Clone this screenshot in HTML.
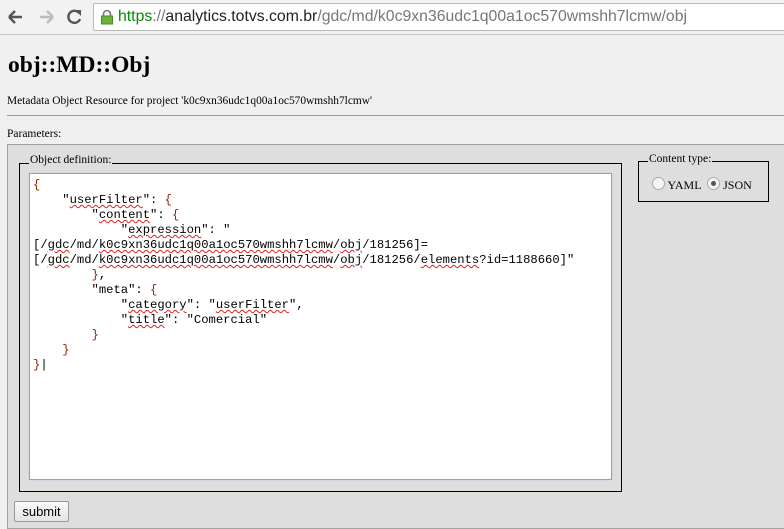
<!DOCTYPE html>
<html><head><style>
body{margin:0;width:784px;height:529px;background:#f0f0f0;position:relative;overflow:hidden;font-family:"Liberation Serif",serif;}
.bar{position:absolute;left:0;top:0;width:784px;height:34px;background:#f2f2f2;border-bottom:1px solid #c8c8c8;}
.addr{position:absolute;left:93px;top:3px;width:700px;height:26px;background:#fff;border:1px solid #b8b8b8;border-radius:2px;font-family:"Liberation Sans",sans-serif;font-size:15.8px;line-height:26px;color:#777;}
.abs{position:absolute;}
h1{position:absolute;left:8px;top:52px;margin:0;font-size:23.5px;font-weight:bold;color:#000;}
.code{position:absolute;left:29px;top:173px;background:#fff;border:1px solid #7ea3e0;box-shadow:0 0 1px #9fbef0;font-family:"Liberation Mono",monospace;font-size:12.2px;line-height:15px;white-space:pre;padding:4px 0 0 3px;box-sizing:border-box;width:583px;height:307px;color:#000}
.u{text-decoration:underline wavy #e02020;text-decoration-thickness:1px;text-underline-offset:1px}
.b{color:#8b2500}
.radio{display:inline-block;width:11px;height:11px;border:1px solid #aaa;border-radius:50%;background:#f4f4f4;vertical-align:-1px;position:relative}
</style></head><body>
<div class="bar">
 <svg class="abs" style="left:6px;top:8px" width="80" height="18"><path d="M3 9h13M3 9l6-6M3 9l6 6" stroke="#555" stroke-width="2.4" fill="none"/><path d="M34 9h13M47 9l-6-6M47 9l-6 6" stroke="#bbb" stroke-width="2.4" fill="none"/><path d="M73 5a6 6 0 1 0 1 6" stroke="#555" stroke-width="2.4" fill="none"/><path d="M69 2h6v6z" fill="#555"/></svg>
 <div class="addr"><svg class="abs" style="left:6px;top:5px" width="14" height="16"><path d="M3.5 7V5a3.5 3.5 0 0 1 7 0v2" stroke="#777" stroke-width="1.6" fill="none"/><rect x="1.5" y="7" width="11" height="8" fill="#6cb33e" stroke="#4a8a2a"/></svg><span style="position:absolute;left:24px;top:0"><span style="color:#0a8a0a">https</span><span style="color:#777">://</span><span style="color:#222">analytics.totvs.com.br</span>/gdc/md/k0c9xn36udc1q00a1oc570wmshh7lcmw/obj</span></div>
</div>
<h1>obj::MD::Obj</h1>
<div class="abs" style="left:7px;top:95px;font-size:11.4px">Metadata Object Resource for project 'k0c9xn36udc1q00a1oc570wmshh7lcmw'</div>
<div class="abs" style="left:7px;top:115px;width:777px;border-top:1px solid #999"></div>
<div class="abs" style="left:7px;top:128px;font-size:11.5px">Parameters:</div>
<div class="abs" style="left:7px;top:144px;width:790px;height:383px;background:#dedede;border:1px solid #a0a0a0"></div>
<div class="abs" style="left:19px;top:163px;width:601px;height:327px;border:1px solid #000"></div>
<div class="abs" style="left:29px;top:154px;background:#dedede;font-size:11.5px;padding:0 1px">Object definition:</div>
<div class="code"><span class="b">{</span>
    "<span class="u">userFilter</span>": <span class="b">{</span>
        "<span class="u">content</span>": <span class="b">{</span>
            "<span class="u">expression</span>": "
[/<span class="u">gdc</span>/md/<span class="u">k0c9xn36udc1q00a1oc570wmshh7lcmw</span>/<span class="u">obj</span>/181256]=
[/<span class="u">gdc</span>/md/<span class="u">k0c9xn36udc1q00a1oc570wmshh7lcmw</span>/<span class="u">obj</span>/181256/<span class="u">elements</span>?id=1188660]"
        <span class="b">}</span>,
        "meta": <span class="b">{</span>
            "<span class="u">category</span>": "<span class="u">userFilter</span>",
            "<span class="u">title</span>": "Comercial"
        <span class="b">}</span>
    <span class="b">}</span>
<span class="b">}</span>|</div>
<div class="abs" style="left:638px;top:161px;width:129px;height:39px;border:1px solid #000"></div>
<div class="abs" style="left:648px;top:153px;background:#dedede;font-size:11.5px;padding:0 1px">Content type:</div>
<div class="abs" style="left:652px;top:177px;font-size:12px"><span class="radio"></span> YAML <span class="radio" style="margin-left:3px"><span style="position:absolute;left:3px;top:3px;width:5px;height:5px;border-radius:50%;background:#555"></span></span> JSON</div>
<div class="abs" style="left:14px;top:501px;width:53px;height:19px;border:1px solid #999;border-radius:2px;background:linear-gradient(#fafafa,#e4e4e4);font-family:'Liberation Sans',sans-serif;font-size:13px;line-height:19px;text-align:center">submit</div>
</body></html>
